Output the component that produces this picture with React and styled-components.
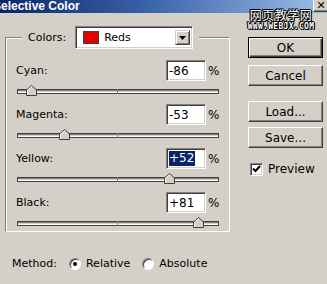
import styled, { createGlobalStyle } from "styled-components";

const GlobalStyle = createGlobalStyle`
  html, body { margin: 0; padding: 0; background: #d4d0c8; }
  body { font-family: "DejaVu Sans", "Liberation Sans", sans-serif; font-size: 11px; color: #000; }
`;

const adjustments = [
    { id: "cyan", label: "Cyan:", value: -86 },
    { id: "magenta", label: "Magenta:", value: -53 },
    { id: "yellow", label: "Yellow:", value: 52, selected: true },
    { id: "black", label: "Black:", value: 81 },
];

const fmt = v => (v > 0 ? `+${v}` : `${v}`);

const Window = styled.div`
    position: relative;
    width: 327px;
    height: 284px;
    overflow: hidden;
    background: #d4d0c8;
`;

const TitleBar = styled.div`
    height: 13px;
    display: flex;
    align-items: flex-start;
    justify-content: space-between;
    background: linear-gradient(to right, #0a246a 0%, #3a62a8 45%, #9cbfea 100%);
    overflow: hidden;
`;

const Title = styled.span`
    font-family: "Liberation Sans", Arial, sans-serif;
    font-weight: bold;
    font-size: 12px;
    line-height: 11px;
    color: #fff;
    margin-left: -7px;
    margin-top: 1px;
    white-space: nowrap;
`;

const CloseBox = styled.div`
    width: 14px;
    height: 11px;
    margin-right: -2px;
    background: #d4d0c8;
    border-right: 1px solid #404040;
    border-bottom: 1px solid #404040;
    border-left: 1px solid #fff;
    box-shadow: inset -1px -1px #808080;
    display: flex;
    align-items: center;
    justify-content: center;
    font-family: "DejaVu Sans", sans-serif;
    font-weight: bold;
    font-size: 11px;
    line-height: 11px;
`;

const Watermark = styled.div`
    position: absolute;
    top: 7px;
    left: 244px;
    width: 74px;
    display: flex;
    flex-direction: column;
    align-items: center;
    color: #fff;
    text-shadow: 1px 0 #000, -1px 0 #000, 0 1px #000, 0 -1px #000, 1px 1px #000, -1px -1px #000;
`;

const WatermarkCn = styled.span`
    font-family: "Noto Sans CJK SC", sans-serif;
    font-size: 12px;
    line-height: 15px;
    letter-spacing: 0.5px;
`;

const WatermarkUrl = styled.span`
    font-family: "DejaVu Sans Mono", monospace;
    font-weight: bold;
    font-size: 8px;
    line-height: 9px;
    letter-spacing: 0.3px;
`;

const Body = styled.div`
    display: flex;
    padding-left: 5px;
`;

const LeftCol = styled.div`
    display: flex;
    flex-direction: column;
    width: 225px;
`;

const Group = styled.fieldset`
    margin: 13px 0 0 0;
    padding: 11px 10px 5px 10px;
    border: 1px solid #808080;
    border-right-color: #fff;
    border-bottom-color: #fff;
    box-shadow: inset 1px 1px #fff, 1px 1px #808080 inset;
    outline: none;
    min-width: 0;
    display: flex;
    flex-direction: column;
`;

const Legend = styled.legend`
    margin-left: 6px;
    padding: 0 6px;
    background: #d4d0c8;
    display: flex;
    align-items: center;
    gap: 9px;
`;

const Select = styled.div`
    width: 112px;
    height: 17px;
    padding: 2px;
    background: #fff;
    border: 1px solid;
    border-color: #808080 #fff #fff #808080;
    box-shadow: inset 1px 1px #404040, inset -1px -1px #d4d0c8;
    display: flex;
    align-items: center;
`;

const Swatch = styled.span`
    width: 14px;
    height: 11px;
    margin-left: 5px;
    background: #e00000;
    border: 1px solid #404040;
`;

const SelectText = styled.span`
    flex: 1;
    margin-left: 5px;
`;

const SelectButton = styled.span`
    width: 13px;
    height: 13px;
    background: #d4d0c8;
    border: 1px solid;
    border-color: #d4d0c8 #404040 #404040 #d4d0c8;
    box-shadow: inset 1px 1px #fff, inset -1px -1px #808080;
    display: flex;
    align-items: center;
    justify-content: center;
`;

const Adjust = styled.div`
    display: flex;
    flex-direction: column;
    margin-bottom: ${p => (p.$last ? 0 : 10)}px;
`;

const ValueRow = styled.div`
    display: flex;
    align-items: center;
    height: 21px;
`;

const Label = styled.span`
    flex: 1;
`;

const NumField = styled.div`
    width: 36px;
    height: 15px;
    padding: 2px 0 2px 2px;
    background: #fff;
    border: 1px solid;
    border-color: #808080 #fff #fff #808080;
    box-shadow: inset 1px 1px #404040, inset -1px -1px #d4d0c8;
    display: flex;
    align-items: center;
    font-size: 12px;
`;

const Selection = styled.span`
    background: #0a246a;
    color: #fff;
    line-height: 15px;
    padding: 0 1px 0 0;
`;

const Percent = styled.span`
    width: 11px;
    margin-left: 2px;
    font-size: 12px;
`;

const Track = styled.div`
    position: relative;
    margin: 8px 0 0 1px;
    width: 200px;
    height: 3px;
    background: #d4d0c8;
    border: 1px solid;
    border-color: #404040 #404040 #404040 #404040;
    box-shadow: inset 0 1px #808080, inset 0 -1px #fff;
`;

const CenterTick = styled.span`
    position: absolute;
    left: 99px;
    top: -1px;
    width: 1px;
    height: 5px;
    background: #808080;
`;

const Thumb = styled.svg`
    position: absolute;
    top: -5px;
    width: 11px;
    height: 11px;
`;

const MethodRow = styled.div`
    display: flex;
    align-items: center;
    margin: 25px 0 0 7px;
    height: 13px;
`;

const MethodLabel = styled.span`
    margin-right: 12px;
`;

const Radio = styled.span`
    width: 12px;
    height: 12px;
    box-sizing: border-box;
    border-radius: 50%;
    background: #fff;
    border: 1px solid;
    border-color: #808080 #fff #fff #808080;
    box-shadow: inset 1px 1px #404040;
    display: flex;
    align-items: center;
    justify-content: center;
    margin-right: 5px;
    &::after {
        content: "";
        width: 4px;
        height: 4px;
        border-radius: 50%;
        background: ${p => (p.$checked ? "#000" : "transparent")};
    }
`;

const RadioText = styled.span`
    margin-right: 12px;
`;

const RightCol = styled.div`
    display: flex;
    flex-direction: column;
    margin: 24px 0 0 18px;
    width: 75px;
`;

const Button = styled.div`
    box-sizing: border-box;
    height: 21px;
    margin-top: ${p => p.$gap || 0}px;
    background: #d4d0c8;
    border: 1px solid;
    border-color: ${p => (p.$default ? "#000" : "#fff #404040 #404040 #fff")};
    box-shadow: ${p => (p.$default
        ? "inset 1px 1px #fff, inset -1px -1px #404040, inset -2px -2px #808080"
        : "inset -1px -1px #808080")};
    display: flex;
    align-items: center;
    justify-content: center;
    font-size: 12px;
`;

const CheckRow = styled.div`
    display: flex;
    align-items: center;
    margin: 14px 0 0 2px;
    gap: 5px;
    font-size: 12px;
`;

const CheckBox = styled.span`
    width: 13px;
    height: 13px;
    box-sizing: border-box;
    background: #fff;
    border: 1px solid;
    border-color: #808080 #fff #fff #808080;
    box-shadow: inset 1px 1px #404040, inset -1px -1px #d4d0c8;
    display: flex;
    align-items: center;
    justify-content: center;
`;

const Slider = ({ value }) => (
    <Track>
        <CenterTick />
        <Thumb viewBox="0 0 11 11" style={{ left: `${99 + value - 5}px` }}>
            <path d="M0.5 10.5 V5 L5.5 0.5 L10.5 5 V10.5 Z" fill="#d4d0c8" stroke="#404040" />
            <path d="M1.5 9.5 V5.4 L5.5 1.8" fill="none" stroke="#fff" />
        </Thumb>
    </Track>
);

const App = () => {
    return (
        <Window>
            <GlobalStyle />
            <TitleBar>
                <Title>Selective Color</Title>
                <CloseBox>✕</CloseBox>
            </TitleBar>
            <Watermark>
                <WatermarkCn>网页教学网</WatermarkCn>
                <WatermarkUrl>WWW.WEBJX.COM</WatermarkUrl>
            </Watermark>
            <Body>
                <LeftCol>
                    <Group>
                        <Legend>
                            <span>Colors:</span>
                            <Select>
                                <Swatch />
                                <SelectText>Reds</SelectText>
                                <SelectButton>
                                    <svg width="7" height="4" viewBox="0 0 7 4"><path d="M0 0H7L3.5 4Z" fill="#000" /></svg>
                                </SelectButton>
                            </Select>
                        </Legend>
                        {adjustments.map((a, i) => (
                            <Adjust key={a.id} $last={i === adjustments.length - 1}>
                                <ValueRow>
                                    <Label>{a.label}</Label>
                                    <NumField>
                                        {a.selected ? <Selection>{fmt(a.value)}</Selection> : fmt(a.value)}
                                    </NumField>
                                    <Percent>%</Percent>
                                </ValueRow>
                                <Slider value={a.value} />
                            </Adjust>
                        ))}
                    </Group>
                    <MethodRow>
                        <MethodLabel>Method:</MethodLabel>
                        <Radio $checked />
                        <RadioText>Relative</RadioText>
                        <Radio />
                        <RadioText>Absolute</RadioText>
                    </MethodRow>
                </LeftCol>
                <RightCol>
                    <Button $default>OK</Button>
                    <Button $gap={7}>Cancel</Button>
                    <Button $gap={15}>Load...</Button>
                    <Button $gap={5}>Save...</Button>
                    <CheckRow>
                        <CheckBox>
                            <svg width="9" height="8" viewBox="0 0 9 8"><path d="M1 3.5 L3.5 6 L8 1" fill="none" stroke="#000" strokeWidth="2" /></svg>
                        </CheckBox>
                        <span>Preview</span>
                    </CheckRow>
                </RightCol>
            </Body>
        </Window>
    );
};

export default App;
